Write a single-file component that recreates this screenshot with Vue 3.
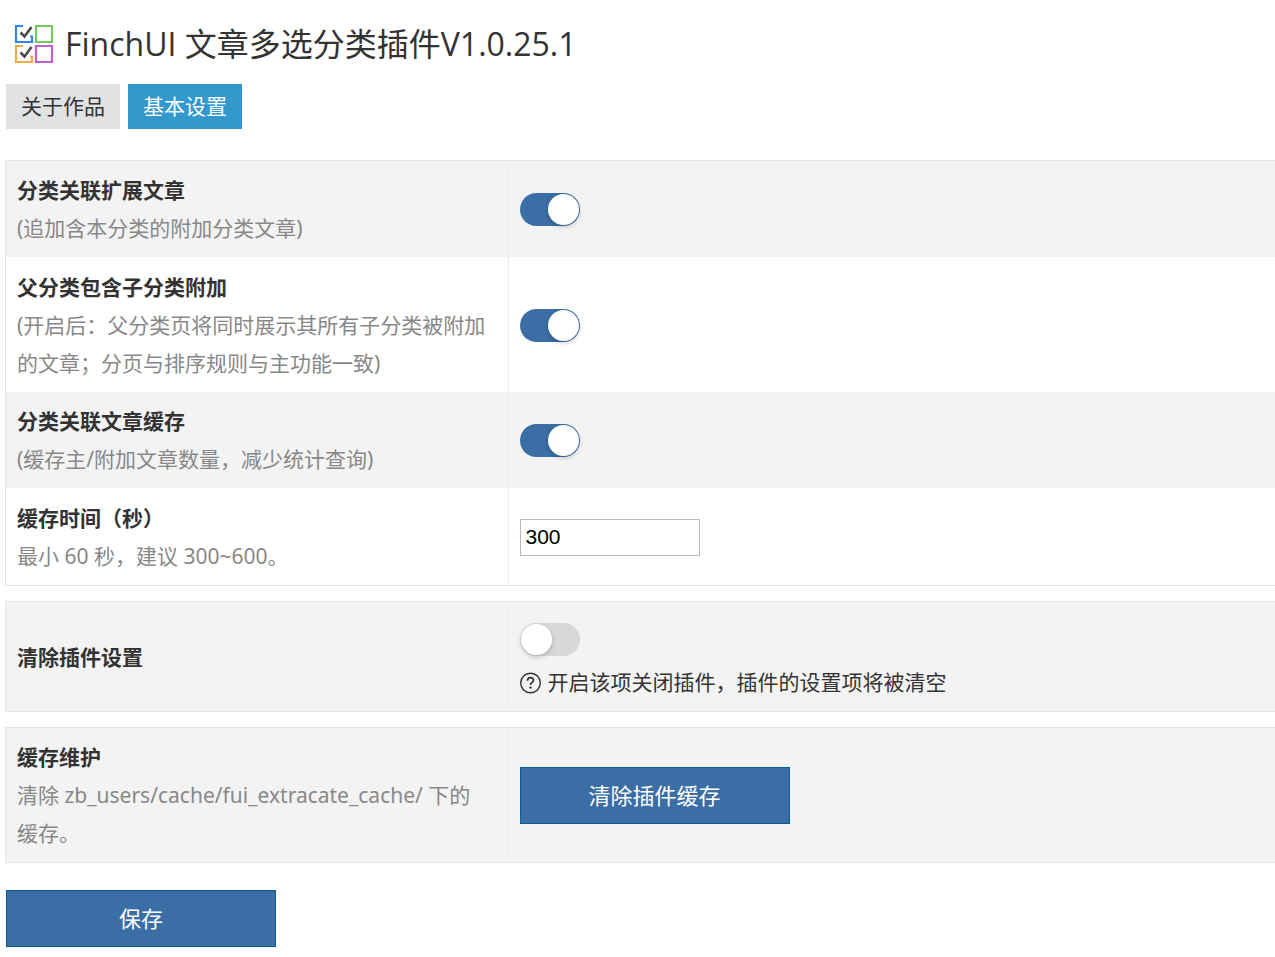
<script setup>
import { ref } from 'vue'

const tabs = ['关于作品', '基本设置']
const activeTab = ref('基本设置')

const switches = ref([
  { id: 'extend', title: '分类关联扩展文章', hint: '(追加含本分类的附加分类文章)', on: true },
  {
    id: 'children',
    title: '父分类包含子分类附加',
    hint: '(开启后：父分类页将同时展示其所有子分类被附加的文章；分页与排序规则与主功能一致)',
    on: true,
  },
  { id: 'cache', title: '分类关联文章缓存', hint: '(缓存主/附加文章数量，减少统计查询)', on: true },
])
const cacheSeconds = ref('300')
const clearSettings = ref(false)
</script>

<template>
  <main class="page" lang="zh-CN">
    <header class="header">
      <svg class="logo" viewBox="0 0 40 40" fill="none" stroke-width="2.200" aria-hidden="true">
        <path d="M9 2H2v16h16v-5.500h-2" stroke="#2f86ea" />
        <path d="M22 2h16v16h-16z" stroke="#76c85c" />
        <path d="M9 22H2v16h16v-5.500h-2" stroke="#e8ae45" />
        <path d="M22 22h16v16h-16z" stroke="#bd5fd0" />
        <path d="M6.500 8.500l4 4L17.500 3" stroke="#4a4a4a" stroke-width="2.600" />
        <path d="M6.500 28.500l4 4L17.500 23" stroke="#4a4a4a" stroke-width="2.600" />
      </svg>
      <h1 class="title">FinchUI 文章多选分类插件V1.0.25.1</h1>
    </header>

    <nav class="tabs">
      <a
        v-for="tab in tabs"
        :key="tab"
        href="#"
        class="tab"
        :class="{ active: tab === activeTab }"
        @click.prevent="activeTab = tab"
        >{{ tab }}</a
      >
    </nav>

    <form class="form" @submit.prevent>
      <table class="panel">
        <tbody>
          <tr v-for="item in switches" :key="item.id">
            <th scope="row">
              <label :for="item.id">{{ item.title }}</label>
              <p class="hint">{{ item.hint }}</p>
            </th>
            <td><input :id="item.id" v-model="item.on" type="checkbox" class="switch" /></td>
          </tr>
          <tr>
            <th scope="row">
              <label for="seconds">缓存时间（秒）</label>
              <p class="hint">最小 60 秒，建议 300~600。</p>
            </th>
            <td><input id="seconds" v-model="cacheSeconds" type="text" class="field" /></td>
          </tr>
        </tbody>
      </table>

      <table class="panel">
        <tbody>
          <tr>
            <th scope="row"><label for="clear">清除插件设置</label></th>
            <td>
              <input id="clear" v-model="clearSettings" type="checkbox" class="switch spaced" />
              <p class="note">
                <svg class="help" viewBox="0 0 22 22" fill="none" stroke="#333" aria-hidden="true">
                  <circle cx="10.500" cy="11" r="9.800" stroke-width="1.400" />
                  <path d="M7.500 8.700c0-4 6-4 6-.5 0 2.300-3 2.200-3 4.800" stroke-width="1.700" />
                  <circle cx="10.500" cy="15.600" r="1.200" fill="#333" stroke="none" />
                </svg>
                <span>开启该项关闭插件，插件的设置项将被清空</span>
              </p>
            </td>
          </tr>
        </tbody>
      </table>

      <table class="panel">
        <tbody>
          <tr>
            <th scope="row">
              缓存维护
              <p class="hint">清除 zb_users/cache/fui_extracate_cache/ 下的缓存。</p>
            </th>
            <td><button type="button" class="button">清除插件缓存</button></td>
          </tr>
        </tbody>
      </table>

      <button type="submit" class="button save">保存</button>
    </form>
  </main>
</template>

<style>
body {
  margin: 0;
  background: #fff;
}
</style>

<style scoped>
.page {
  padding: 22px 0 10px 5px;
  overflow: hidden;
  color: #333;
  font: 21px/38px "Noto Sans", "Noto Sans CJK SC", sans-serif;
}
.header {
  display: flex;
  align-items: center;
  gap: 11px;
  height: 44px;
  padding-left: 9px;
}
.logo {
  width: 40px;
  height: 40px;
}
.title {
  margin: 0;
  font: 400 32px/44px "Open Sans", "Noto Sans CJK SC", sans-serif;
}
.tabs {
  display: flex;
  gap: 8px;
  margin: 18px 0 31px 1px;
}
.tab {
  padding: 0 15px;
  background: #e1e2e3;
  color: #333;
  line-height: 45px;
  text-decoration: none;
}
.tab.active {
  background: #3399cc;
  color: #fff;
}
.form {
  display: flex;
  flex-direction: column;
  gap: 15px;
}
.panel {
  width: 100%;
  table-layout: fixed;
  border: 1px solid #e3e3e3;
  border-right: 0;
  border-spacing: 0;
  border-radius: 2px 0 0 2px;
}
.panel tr:nth-child(odd) {
  background: #f3f3f3;
}
th,
td {
  padding: 10px 11px;
  vertical-align: middle;
}
th {
  box-sizing: border-box;
  width: 39.6%;
  padding-right: 20px;
  border-right: 1px solid #eee;
  text-align: left;
  font-weight: 700;
}
.panel tr:nth-child(even) > * {
  padding-top: 11px;
}
.hint {
  margin: 0;
  color: #888;
  font-weight: 400;
}
.switch {
  appearance: none;
  display: block;
  box-sizing: border-box;
  width: 60px;
  height: 33px;
  margin: 0;
  padding: 1px;
  border-radius: 17px;
  background: #d8d8d8;
  cursor: pointer;
}
.switch::before {
  content: "";
  display: block;
  width: 31px;
  height: 31px;
  border-radius: 50%;
  background: #fff;
  box-shadow: 0 2px 5px rgba(0, 0, 0, 0.2);
}
.switch:checked {
  background: #3a6ea5;
}
.switch:checked::before {
  margin-left: 27px;
}
.spaced {
  margin: 11px 0 8px;
}
.note {
  display: flex;
  align-items: center;
  gap: 6px;
  margin: 0;
  line-height: 37px;
}
.help {
  width: 22px;
  height: 22px;
}
.field {
  display: block;
  box-sizing: border-box;
  width: 180px;
  height: 37px;
  padding: 0 5px;
  border: 1px solid #bbb;
  background: #fff;
  color: #000;
  font: 21px "Liberation Sans", sans-serif;
}
.button {
  display: block;
  box-sizing: border-box;
  width: 270px;
  height: 57px;
  padding: 0 0 3px;
  border: 1px solid #0b5c93;
  background: #3a6ea5;
  color: #fff;
  font: 22px "Noto Sans", "Noto Sans CJK SC", sans-serif;
  cursor: pointer;
}
.save {
  margin: 12px 0 0 1px;
}
</style>
